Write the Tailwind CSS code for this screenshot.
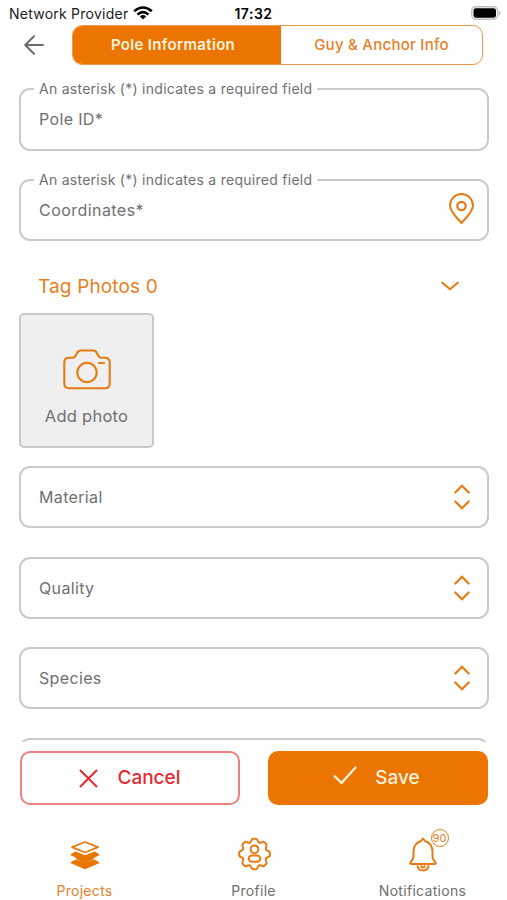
<!DOCTYPE html>
<html lang="en">
<head>
<meta charset="utf-8">
<meta name="viewport" content="width=device-width, initial-scale=1">
<title>Pole Information</title>
<script src="https://cdn.jsdelivr.net/npm/@tailwindcss/browser@4"></script>
</head>
<body class="bg-white">
<div class="flex h-[900px] w-[507px] flex-col overflow-hidden bg-white font-['Inter',sans-serif] text-[#707070]">
  <header class="shrink-0">
    <div class="grid h-[25px] grid-cols-3 items-center pt-[2px] pr-[9px] pl-[9px] text-[14px] text-[#1c1c1c]">
      <div class="flex items-center gap-[5px] whitespace-nowrap"><span class="tracking-[0.24px]">Network Provider</span>
        <svg class="mt-[-2px] h-[14px] w-[20px] shrink-0" viewBox="0 0 20 14" fill="none" stroke="#000" stroke-width="2.6"><path d="M1.2 5.2Q10-2.2 18.8 5.2M4.5 8.5Q10 3.8 15.5 8.5"/><path d="M6.9 10.4Q10 7.8 13.1 10.4L10 13.6Z" fill="#000" stroke="none"/></svg>
      </div>
      <div class="text-center font-semibold tracking-[0.5px] text-black">17:32</div>
      <svg class="mt-[-1px] mr-[-3px] h-[14px] w-[30px] justify-self-end" viewBox="0 0 30 14"><rect x=".7" y=".7" width="26" height="12.6" rx="4" fill="#fff" stroke="#bdbdbd" stroke-width="1.4"/><rect x="2.5" y="2.3" width="22.5" height="9.4" rx="2.3"/><path d="M28 4.5q3 2.5 0 5z" fill="#bdbdbd"/></svg>
    </div>
    <div class="flex h-[40px] items-center pl-[24px]">
      <svg class="mr-[28px] h-[20px] w-[20px]" viewBox="0 0 20 20" fill="none" stroke="#6b6b6b" stroke-width="2" stroke-linecap="round" stroke-linejoin="round"><path d="M19 10H1.2M10 1.2L1.2 10 10 18.8"/></svg>
      <div class="flex h-[40px] w-[411px] overflow-hidden rounded-[10px] border border-[#ec994a] text-[15px]">
        <div class="flex w-[208px] items-center justify-center bg-[#eb7500] pr-[8px] font-semibold tracking-[0.33px] text-[#fff2df]">Pole Information</div>
        <div class="flex flex-1 items-center justify-center font-medium tracking-[0.26px] text-[#e8802a]">Guy &amp; Anchor Info</div>
      </div>
    </div>
  </header>

  <main class="h-[677px] shrink-0 overflow-hidden pt-[14px] pr-[18px] pl-[19px]">
    <fieldset class="h-[72px] rounded-[11px] border-2 border-[#cacaca] px-[13px]">
      <legend class="h-[20px] px-[5px] text-[14px] leading-[20px] tracking-[0.27px] whitespace-nowrap">An asterisk (*) indicates a required field</legend>
      <div class="pt-[8px] pl-[5px] text-[16px] leading-[24px] tracking-[0.35px]">Pole ID*</div>
    </fieldset>
    <fieldset class="mt-[19px] h-[71px] rounded-[11px] border-2 border-[#cacaca] px-[13px]">
      <legend class="h-[20px] px-[5px] text-[14px] leading-[20px] tracking-[0.27px] whitespace-nowrap">An asterisk (*) indicates a required field</legend>
      <div class="flex justify-between pl-[5px]"><span class="pt-[8px] text-[16px] leading-[24px] tracking-[0.45px]">Coordinates*</span>
        <svg class="mr-[-1px] mt-[3px] h-[32px] w-[27px]" viewBox="0 0 27 32" fill="none" stroke="#e87a12" stroke-width="2" stroke-linejoin="round"><path d="M13.5 30C9 25 2 18.5 2 12.5a11.5 11.5 0 0 1 23 0C25 18.5 18 25 13.5 30Z"/><circle cx="13.5" cy="13" r="4.2" stroke-width="2.2"/></svg>
      </div>
    </fieldset>

    <div class="flex h-[72px] items-end justify-between pr-[30px] pb-[12px] pl-[19px] text-[#e87e20]">
      <h2 class="text-[19px] leading-[28px] tracking-[0.15px]">Tag Photos 0</h2>
      <svg class="mb-[9px] h-[11px] w-[18px]" viewBox="0 0 18 11" fill="none" stroke="#e87a12" stroke-width="2.1" stroke-linecap="round" stroke-linejoin="round"><path d="M1.3 1.8L9 8.3 16.7 1.8"/></svg>
    </div>
    <div class="flex h-[135px] w-[135px] flex-col items-center rounded-[5px] border-2 border-[#c8c8c8] bg-[#efefef] pt-[34px]">
      <svg class="h-[41px] w-[48px]" viewBox="0 0 48 41" fill="none" stroke="#e87a12" stroke-width="2.1" stroke-linecap="round" stroke-linejoin="round"><path d="M6 8.7H9.5Q12 8.7 13 6L14.2 3.7Q15.2 1.5 18 1.5H30Q32.8 1.5 33.8 3.7L35 6Q36 8.7 38.5 8.7H42Q46.7 8.7 46.7 13.5V34.5Q46.7 39.2 42 39.2H6Q1.3 39.2 1.3 34.5V13.5Q1.3 8.7 6 8.7Z"/><circle cx="24" cy="23.5" r="9.7"/><path d="M36 14H41"/></svg>
      <span class="mt-[14px] text-[16.5px] leading-[24px] tracking-[0.25px]">Add photo</span>
    </div>

    <div class="mt-[18px] flex flex-col gap-[28.5px] text-[16px] tracking-[0.35px]">
      <div class="flex h-[62px] shrink-0 items-center justify-between rounded-[11px] border-2 border-[#cacaca] pr-[17px] pl-[18px]"><span>Material</span>
        <svg class="h-[26px] w-[16px]" viewBox="0 0 16 26" fill="none" stroke="#e87a12" stroke-width="2.2" stroke-linecap="round"><path d="M1.3 8.5L8 1.8 14.7 8.500M1.3 17.5L8 24.2 14.7 17.5"/></svg></div>
      <div class="flex h-[62px] shrink-0 items-center justify-between rounded-[11px] border-2 border-[#cacaca] pr-[17px] pl-[18px]"><span>Quality</span>
        <svg class="h-[26px] w-[16px]" viewBox="0 0 16 26" fill="none" stroke="#e87a12" stroke-width="2.2" stroke-linecap="round"><path d="M1.3 8.5L8 1.8 14.7 8.5M1.3 17.5L8 24.2 14.7 17.5"/></svg></div>
      <div class="flex h-[62px] shrink-0 items-center justify-between rounded-[11px] border-2 border-[#cacaca] pr-[17px] pl-[18px]"><span>Species</span>
        <svg class="h-[26px] w-[16px]" viewBox="0 0 16 26" fill="none" stroke="#e87a12" stroke-width="2.2" stroke-linecap="round"><path d="M1.3 8.5L8 1.8 14.7 8.5M1.3 17.5L8 24.2 14.7 17.5"/></svg></div>
      <div class="h-[62px] shrink-0 rounded-[11px] border-2 border-[#cacaca]"></div>
    </div>
  </main>

  <div class="flex shrink-0 justify-between pt-[9px] pr-[19px] pl-[20px] text-[19px] font-medium">
    <button class="flex h-[54px] w-[220px] items-center justify-center gap-[19px] rounded-[10px] border-2 border-[#f07f80] text-[#e9292e]">
      <svg class="h-[19px] w-[19px]" viewBox="0 0 19 19" fill="none" stroke="currentColor" stroke-width="2" stroke-linecap="round"><path d="M1.5 1.5L17.5 17.5M17.5 1.5L1.5 17.5"/></svg><span class="pt-px">Cancel</span></button>
    <button class="flex h-[54px] w-[220px] items-center justify-center gap-[18px] rounded-[10px] bg-[#eb7500] pr-[3px] text-[#fff2df]">
      <svg class="mt-[-5px] h-[19px] w-[24px]" viewBox="0 0 24 19" fill="none" stroke="currentColor" stroke-width="2.3" stroke-linecap="round" stroke-linejoin="round"><path d="M1.7 10.2L8.5 17 22.5 1.5"/></svg><span class="pt-px">Save</span></button>
  </div>

  <nav class="flex flex-1 pt-[29px] text-[14px] tracking-[0.3px]">
    <div class="flex w-[169px] flex-col items-center text-[#e8802a]">
      <svg class="h-[40px] w-[40px]" viewBox="0 0 40 40"><path d="M20 8L33 13.2 20 18.5 7 13.2Z" fill="#fff" stroke="#e87a12" stroke-width="1.8" stroke-linejoin="round"/><path d="M6 20L10.5 17.5 20 21.3 29.5 17.5 34 20V21.5L20 27.5 6 21.5ZM6 28L11 25.5 20 29 29 25.5 34 28V29.2L20 35.3 6 29.2Z" fill="#e87600"/><path d="M8 20.5L20 25.500 32 20.500 28 25.500 20 29.500 12 25.500Z" fill="#e87600"/></svg>
      <span class="mt-[7px] leading-[20px]">Projects</span></div>
    <div class="flex w-[169px] flex-col items-center">
      <svg class="h-[40px] w-[40px]" viewBox="-20.5 -20 40 40" fill="none" stroke="#e87a12" stroke-width="2" stroke-linecap="round"><defs><path id="tooth" d="M-4.7-11.4C-2.8-12-3.2-15.3-1.5-15.3H1.5C3.2-15.3 2.8-12 4.7-11.4"/></defs><use href="#tooth"/><use href="#tooth" transform="rotate(45)"/><use href="#tooth" transform="rotate(90)"/><use href="#tooth" transform="rotate(135)"/><use href="#tooth" transform="rotate(180)"/><use href="#tooth" transform="rotate(225)"/><use href="#tooth" transform="rotate(270)"/><use href="#tooth" transform="rotate(315)"/><circle cy="-4.7" r="3.9"/><rect x="-5.8" y="1.4" width="11.6" height="6.4" rx="3.2"/></svg>
      <span class="mt-[7px] leading-[20px]">Profile</span></div>
    <div class="flex w-[169px] flex-col items-center">
      <div class="relative">
        <svg class="h-[40px] w-[40px]" viewBox="0 0 40 40" fill="none" stroke="#e87a12" stroke-width="2" stroke-linejoin="round"><path d="M20 4.5L22 7Q29.5 9.5 29.5 18V23Q30 26 32.5 28.3Q33.5 30 31.5 30H8.5Q6.5 30 7.5 28.3Q10 26 10.5 23V18Q10.5 9.5 18 7Z"/><path d="M14.5 31.5Q15 36.5 20 36.5T25.5 31.5M18 31.5Q18.5 33.5 20 33.5T22 31.5"/></svg>
        <span class="absolute top-[-5px] left-[28px] flex h-[18px] w-[18px] items-center justify-center rounded-full border border-[#e8802a] text-[11px] leading-none tracking-normal text-[#e8802a]">90</span>
      </div>
      <span class="mt-[7px] leading-[20px]">Notifications</span></div>
  </nav>
</div>
</body>
</html>
